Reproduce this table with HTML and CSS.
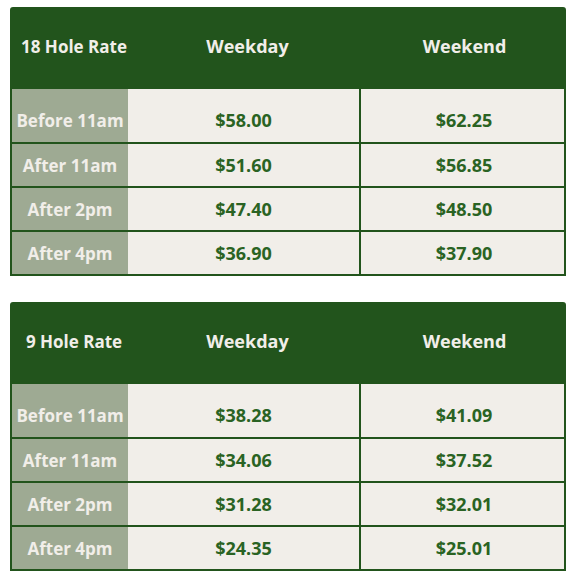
FILE: index.html
```html
<!DOCTYPE html>
<html>
<head>
<meta charset="utf-8">
<link rel="stylesheet" href="styles.css">
</head>
<body>
<div class="page">
  <div class="rate-table">
    <div class="row head">
      <div class="cell label-h">18 Hole Rate</div>
      <div class="cell wd">Weekday</div>
      <div class="cell we">Weekend</div>
    </div>
    <div class="row first">
      <div class="cell label">Before 11am</div>
      <div class="cell wd price">$58.00</div>
      <div class="cell we price">$62.25</div>
    </div>
    <div class="row">
      <div class="cell label">After 11am</div>
      <div class="cell wd price">$51.60</div>
      <div class="cell we price">$56.85</div>
    </div>
    <div class="row">
      <div class="cell label">After 2pm</div>
      <div class="cell wd price">$47.40</div>
      <div class="cell we price">$48.50</div>
    </div>
    <div class="row">
      <div class="cell label">After 4pm</div>
      <div class="cell wd price">$36.90</div>
      <div class="cell we price">$37.90</div>
    </div>
  </div>

  <div class="rate-table">
    <div class="row head">
      <div class="cell label-h">9 Hole Rate</div>
      <div class="cell wd">Weekday</div>
      <div class="cell we">Weekend</div>
    </div>
    <div class="row first">
      <div class="cell label">Before 11am</div>
      <div class="cell wd price">$38.28</div>
      <div class="cell we price">$41.09</div>
    </div>
    <div class="row">
      <div class="cell label">After 11am</div>
      <div class="cell wd price">$34.06</div>
      <div class="cell we price">$37.52</div>
    </div>
    <div class="row">
      <div class="cell label">After 2pm</div>
      <div class="cell wd price">$31.28</div>
      <div class="cell we price">$32.01</div>
    </div>
    <div class="row">
      <div class="cell label">After 4pm</div>
      <div class="cell wd price">$24.35</div>
      <div class="cell we price">$25.01</div>
    </div>
  </div>
</div>
</body>
</html>
```

FILE: styles.css
```css
html, body {
  margin: 0;
  padding: 0;
  background: #ffffff;
}
body {
  font-family: "Open Sans", "Liberation Sans", sans-serif;
  font-weight: 700;
  font-size: 17px;
}
.page {
  display: flex;
  flex-direction: column;
  gap: 26px;
  padding: 7px 0 0 10px;
}
.rate-table {
  width: 552px;
  border: 2px solid #22541c;
  border-radius: 3px 3px 0 0;
  background: #22541c;
  display: flex;
  flex-direction: column;
}
.row {
  display: grid;
  grid-template-columns: 116px 233px 203px;
  height: 42px;
  border-top: 2px solid #22541c;
}
.row.head {
  height: 80px;
  border-top: none;
  background: #22541c;
  color: #f1eee9;
  font-size: 18px;
}
.row.first {
  height: 53px;
  border-top: none;
}
.cell {
  display: flex;
  align-items: center;
  justify-content: center;
  line-height: 1;
}
.head .cell {
  padding-bottom: 6px;
}
.first .cell {
  padding-top: 9px;
}
.label-h {
  padding-left: 8px;
  font-size: 17px;
}
.head .wd {
  padding-left: 6px;
}
.head .we {
  padding-left: 4px;
}
.label {
  background: #9eaa93;
  color: #f1eee9;
}
.price {
  background: #f1eee9;
  color: #2a6323;
  font-size: 18px;
}
.price.wd {
  border-right: 2px solid #22541c;
}
.price.we {
  padding-left: 3px;
}
```
